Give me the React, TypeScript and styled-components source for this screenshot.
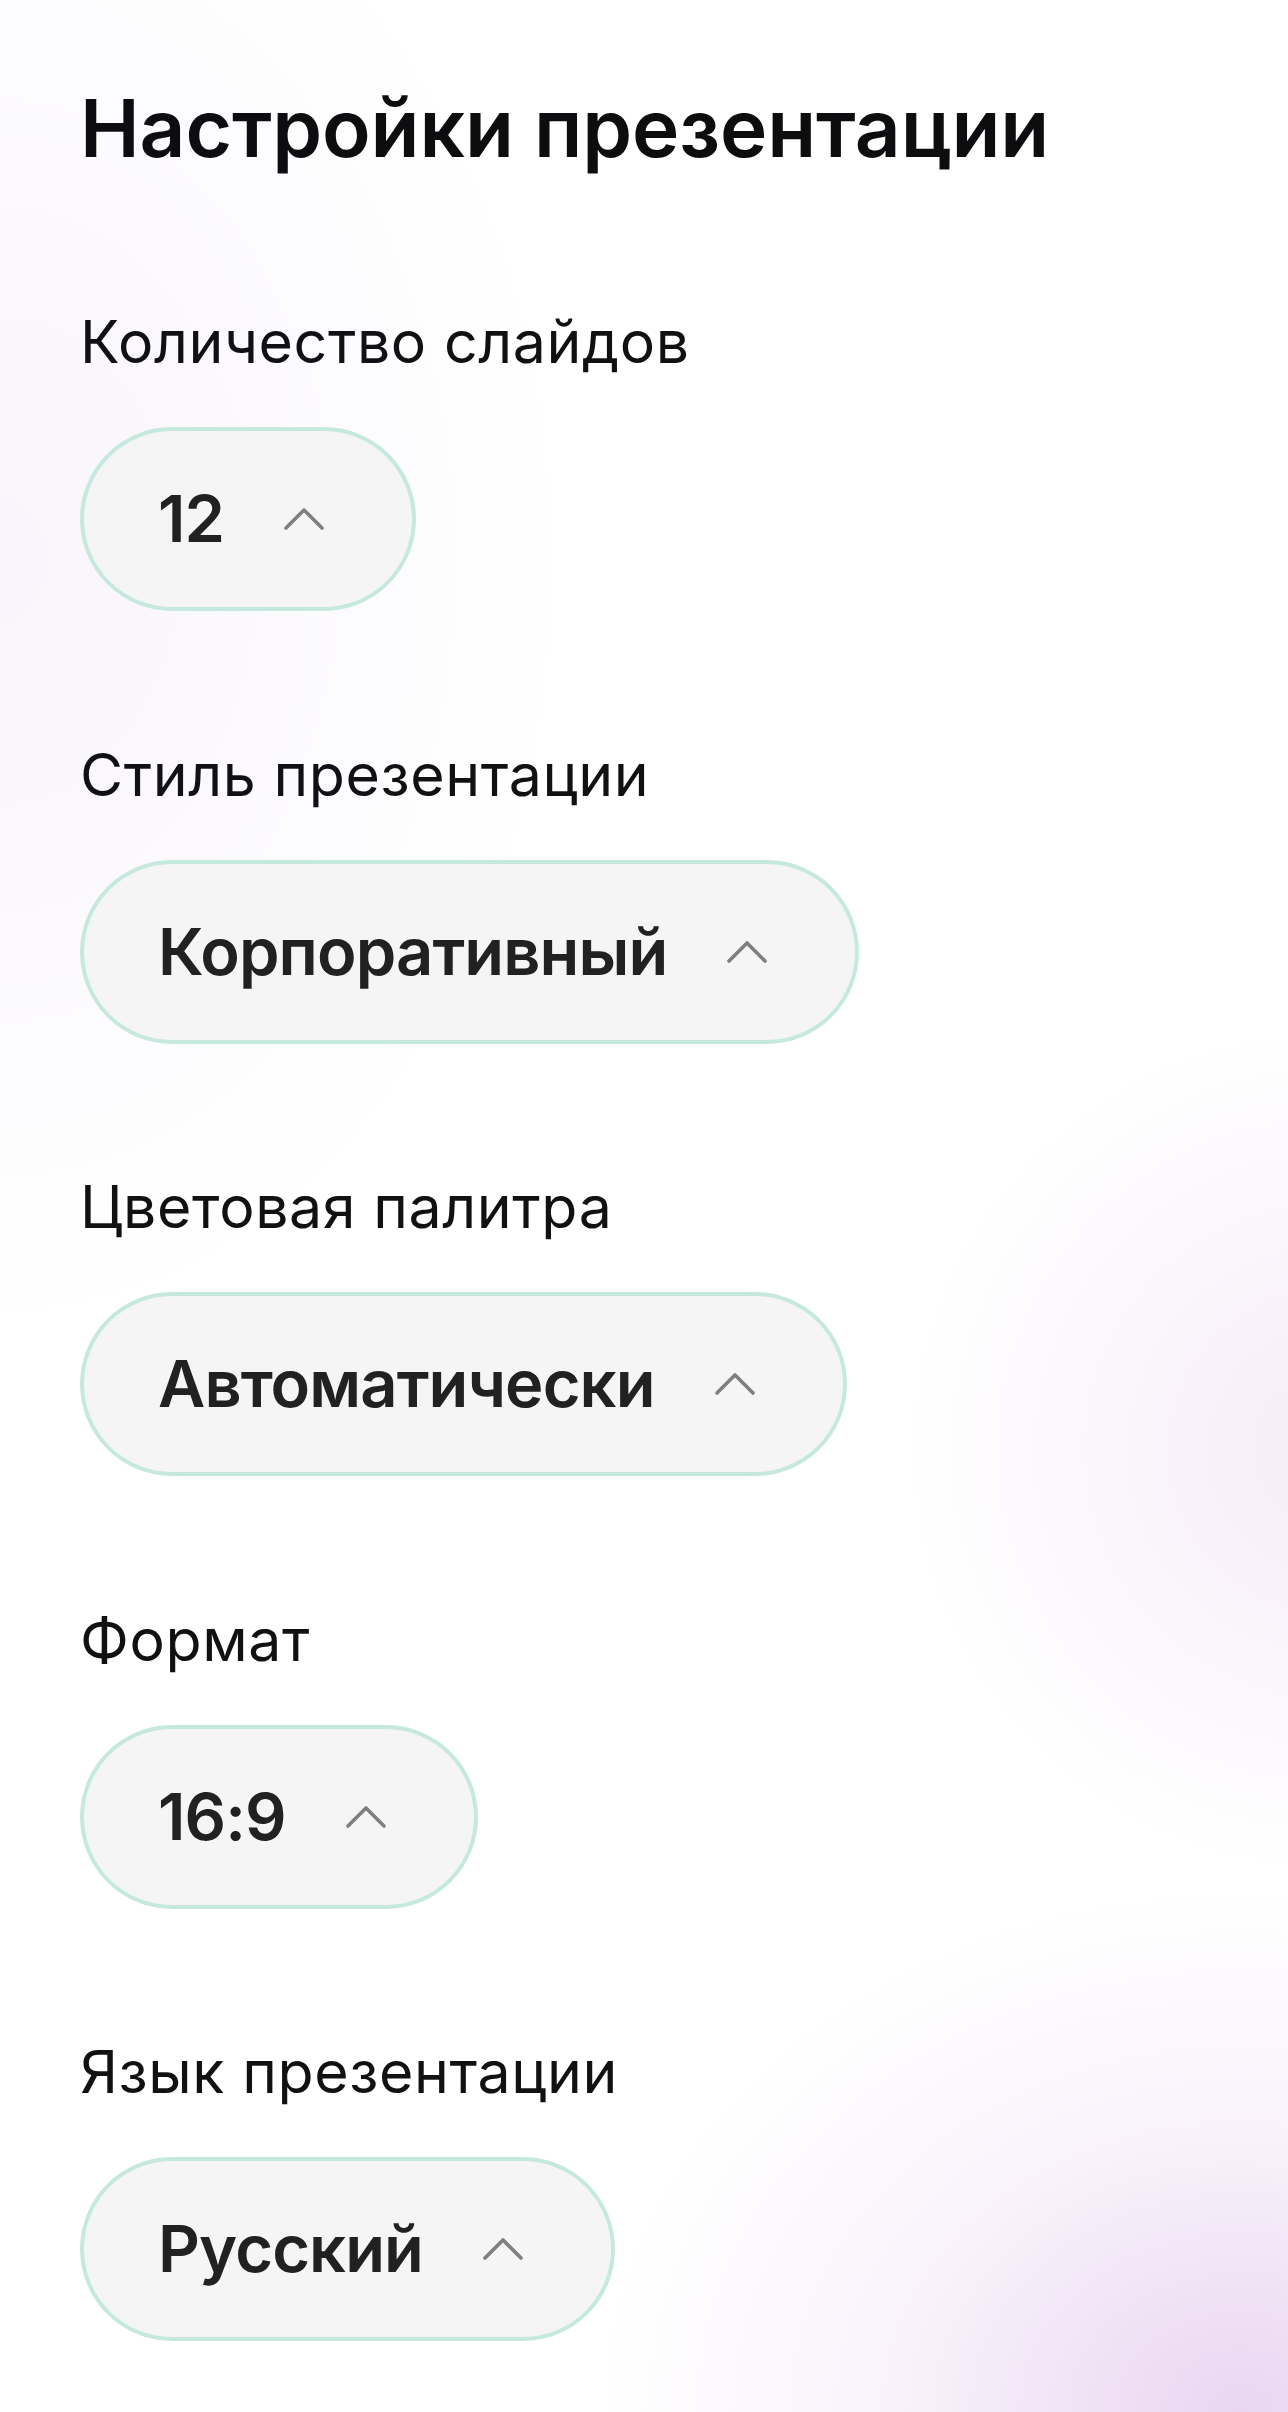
import React from "react";
import styled, { createGlobalStyle } from "styled-components";

const GlobalStyle = createGlobalStyle`
  * {
    box-sizing: border-box;
  }
  body {
    margin: 0;
    font-family: Inter, "Noto Sans", sans-serif;
    background: #fff;
  }
`;

const Page = styled.main`
  min-height: 2412px;
  padding: 80px 80px 0;
  display: flex;
  flex-direction: column;
  background:
    radial-gradient(ellipse 640px 520px at 1240px 2412px, rgba(226, 200, 236, 0.75), rgba(236, 214, 242, 0.3) 55%, rgba(255, 255, 255, 0) 100%),
    radial-gradient(circle 420px at 1330px 1450px, rgba(240, 222, 244, 0.6), rgba(255, 255, 255, 0) 100%),
    radial-gradient(ellipse 560px 760px at 0px 560px, rgba(246, 240, 250, 0.7), rgba(255, 255, 255, 0) 100%),
    #fff;
`;

const Title = styled.h1`
  margin: 0 0 131px;
  font-size: 80px;
  line-height: 96px;
  font-weight: 600;
  letter-spacing: -0.1px;
  color: #0d0d0f;
`;

const Fields = styled.div`
  display: flex;
  flex-direction: column;
  gap: 128.5px;
`;

const Field = styled.section`
  display: flex;
  flex-direction: column;
  align-items: flex-start;
  gap: 50px;
`;

const Label = styled.div`
  font-size: 59px;
  line-height: 70px;
  font-weight: 400;
  letter-spacing: 0.6px;
  color: #111113;
`;

const Select = styled.button`
  display: inline-flex;
  align-items: center;
  gap: 58px;
  height: 184px;
  padding: 0 86px 0 74px;
  border: 4px solid #c6e9de;
  border-radius: 92px;
  background: #f5f5f5;
  font-family: inherit;
  font-size: 65px;
  line-height: 1.2;
  font-weight: 600;
  letter-spacing: -0.9px;
  color: #212121;
  cursor: pointer;
`;

const Chevron = () => (
  <svg width="44" height="28" viewBox="0 0 44 28" fill="none">
    <polyline
      points="4,23 22,5 40,23"
      stroke="#7f7f7f"
      strokeWidth="3.6"
      strokeLinecap="round"
      strokeLinejoin="round"
    />
  </svg>
);

const fields = [
  { label: "Количество слайдов", value: "12" },
  { label: "Стиль презентации", value: "Корпоративный" },
  { label: "Цветовая палитра", value: "Автоматически" },
  { label: "Формат", value: "16:9" },
  { label: "Язык презентации", value: "Русский" },
];

const App = () => (
  <>
    <GlobalStyle />
    <Page>
      <Title>Настройки презентации</Title>
      <Fields>
        {fields.map(f => (
          <Field key={f.label}>
            <Label>{f.label}</Label>
            <Select type="button">
              <span>{f.value}</span>
              <Chevron />
            </Select>
          </Field>
        ))}
      </Fields>
    </Page>
  </>
);

export default App;
